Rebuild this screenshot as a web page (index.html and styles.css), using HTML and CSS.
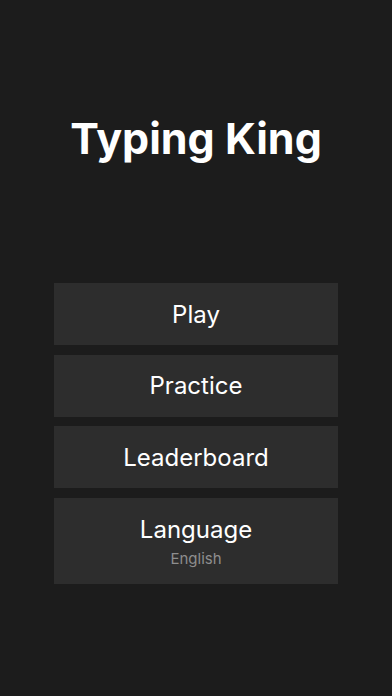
FILE: index.html
```html
<!DOCTYPE html>
<html lang="en">
<head>
<meta charset="utf-8">
<title>Typing King</title>
<link rel="stylesheet" href="styles.css">
</head>
<body>
<main class="screen">
  <h1 class="title">Typing King</h1>
  <nav class="menu">
    <button class="menu-btn">Play</button>
    <button class="menu-btn">Practice</button>
    <button class="menu-btn">Leaderboard</button>
    <button class="menu-btn menu-btn--tall">
      <span class="menu-label">Language</span>
      <span class="menu-sub">English</span>
    </button>
  </nav>
</main>
</body>
</html>
```

FILE: styles.css
```css
html, body {
  margin: 0;
  padding: 0;
  background: #1c1c1c;
}
body {
  font-family: Inter, "Noto Sans", "Liberation Sans", sans-serif;
  color: #ffffff;
  width: 392px;
  height: 696px;
  overflow: hidden;
}
.screen {
  display: flex;
  flex-direction: column;
  align-items: center;
  padding-top: 113px;
}
.title {
  margin: 0;
  font-size: 43px;
  line-height: 50px;
  font-weight: 700;
  color: #ffffff;
}
.menu {
  margin-top: 120px;
  width: 284px;
  display: flex;
  flex-direction: column;
  gap: 9.5px;
}
.menu-btn {
  height: 62px;
  border: none;
  padding: 0;
  margin: 0;
  background: #2d2d2d;
  color: #ffffff;
  font-family: inherit;
  font-size: 24px;
  font-weight: 400;
  display: flex;
  flex-direction: column;
  align-items: center;
  justify-content: center;
}
.menu-btn--tall {
  height: 86px;
  justify-content: flex-start;
  padding-top: 18px;
  gap: 6px;
}
.menu-label {
  line-height: 28px;
}
.menu-sub {
  font-size: 15px;
  line-height: 18px;
  color: #8e8e8e;
}
```
